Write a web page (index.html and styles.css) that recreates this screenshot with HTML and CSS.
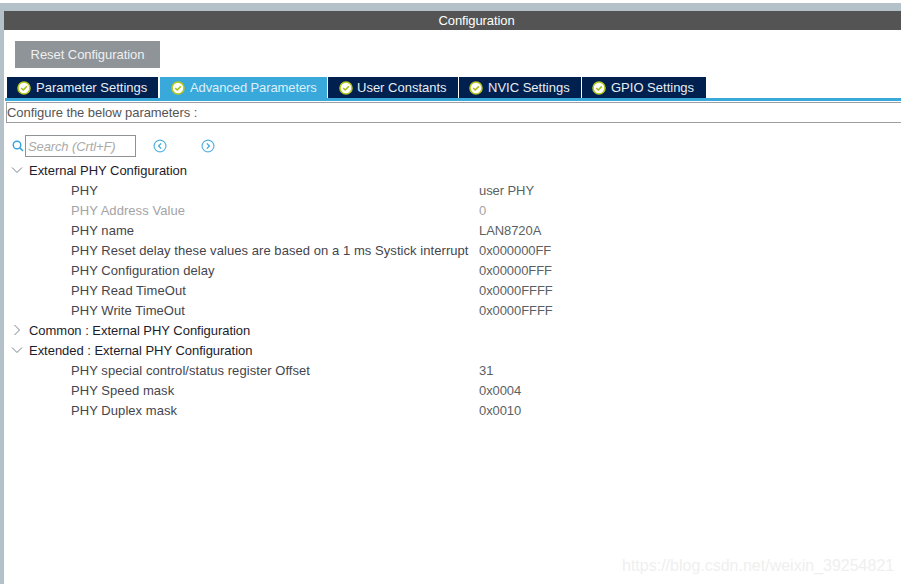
FILE: index.html
```html
<!DOCTYPE html>
<html lang="en">
<head>
<meta charset="utf-8">
<title>Configuration</title>
<link rel="stylesheet" href="styles.css">
</head>
<body>
<div class="topbar"></div>
<main class="panel">
  <header class="title">Configuration</header>
  <div class="toolbar"><button class="reset">Reset Configuration</button></div>
  <nav class="tabs">
    <div class="tab t1"><svg class="chk" viewBox="0 0 14 14"><circle cx="7" cy="7" r="6" fill="#fff" stroke="#b5c71c" stroke-width="1.6"/><path d="M4.2 7l2 2 3.6-3.6" fill="none" stroke="#a9bc10" stroke-width="1.5"/></svg>Parameter Settings</div>
    <div class="tab t2 active"><svg class="chk" viewBox="0 0 14 14"><circle cx="7" cy="7" r="6" fill="#fff" stroke="#b5c71c" stroke-width="1.6"/><path d="M4.2 7l2 2 3.6-3.6" fill="none" stroke="#a9bc10" stroke-width="1.5"/></svg>Advanced Parameters</div>
    <div class="tab t3"><svg class="chk" viewBox="0 0 14 14"><circle cx="7" cy="7" r="6" fill="#fff" stroke="#b5c71c" stroke-width="1.6"/><path d="M4.2 7l2 2 3.6-3.6" fill="none" stroke="#a9bc10" stroke-width="1.5"/></svg>User Constants</div>
    <div class="tab t4"><svg class="chk" viewBox="0 0 14 14"><circle cx="7" cy="7" r="6" fill="#fff" stroke="#b5c71c" stroke-width="1.6"/><path d="M4.2 7l2 2 3.6-3.6" fill="none" stroke="#a9bc10" stroke-width="1.5"/></svg>NVIC Settings</div>
    <div class="tab t5"><svg class="chk" viewBox="0 0 14 14"><circle cx="7" cy="7" r="6" fill="#fff" stroke="#b5c71c" stroke-width="1.6"/><path d="M4.2 7l2 2 3.6-3.6" fill="none" stroke="#a9bc10" stroke-width="1.5"/></svg>GPIO Settings</div>
  </nav>
  <div class="tabline"></div>
  <div class="desc">Configure the below parameters :</div>
  <div class="search">
    <svg class="mag" viewBox="0 0 12 12"><circle cx="5" cy="5" r="3.8" fill="none" stroke="#35a4dc" stroke-width="1.4"/><path d="M7.8 7.8l3.2 3.2" stroke="#35a4dc" stroke-width="1.6"/></svg>
    <div class="field">Search (Crtl+F)</div>
    <svg class="nav prev" viewBox="0 0 14 14"><circle cx="7" cy="7" r="5.9" fill="none" stroke="#5ab4e2" stroke-width="1.2"/><path d="M8.2 4.4L5.6 7l2.6 2.6" fill="none" stroke="#35a4dc" stroke-width="1.2"/></svg>
    <svg class="nav next" viewBox="0 0 14 14"><circle cx="7" cy="7" r="5.9" fill="none" stroke="#5ab4e2" stroke-width="1.2"/><path d="M5.8 4.4L8.4 7l-2.6 2.6" fill="none" stroke="#35a4dc" stroke-width="1.2"/></svg>
  </div>
  <section class="tree">
    <div class="row group"><svg class="arrow" viewBox="0 0 12 12"><path d="M1 3.5l5 5 5-5" fill="none" stroke="#7d8387" stroke-width="1"/></svg><span>External PHY Configuration</span></div>
    <div class="row"><span class="name">PHY</span><span class="val">user PHY</span></div>
    <div class="row off"><span class="name">PHY Address Value</span><span class="val">0</span></div>
    <div class="row"><span class="name">PHY name</span><span class="val">LAN8720A</span></div>
    <div class="row"><span class="name">PHY Reset delay these values are based on a 1 ms Systick interrupt</span><span class="val">0x000000FF</span></div>
    <div class="row"><span class="name">PHY Configuration delay</span><span class="val">0x00000FFF</span></div>
    <div class="row"><span class="name">PHY Read TimeOut</span><span class="val">0x0000FFFF</span></div>
    <div class="row"><span class="name">PHY Write TimeOut</span><span class="val">0x0000FFFF</span></div>
    <div class="row group"><svg class="arrow" viewBox="0 0 12 12"><path d="M3.5 1l5 5-5 5" fill="none" stroke="#7d8387" stroke-width="1"/></svg><span>Common : External PHY Configuration</span></div>
    <div class="row group"><svg class="arrow" viewBox="0 0 12 12"><path d="M1 3.5l5 5 5-5" fill="none" stroke="#7d8387" stroke-width="1"/></svg><span>Extended : External PHY Configuration</span></div>
    <div class="row"><span class="name">PHY special control/status register Offset</span><span class="val">31</span></div>
    <div class="row"><span class="name">PHY Speed mask</span><span class="val">0x0004</span></div>
    <div class="row"><span class="name">PHY Duplex mask</span><span class="val">0x0010</span></div>
  </section>
</main>
<div class="mark">https://blog.csdn.net/weixin_39254821</div>
</body>
</html>
```
FILE: styles.css
```css
* { box-sizing: border-box; }
html, body { margin: 0; height: 100%; overflow: hidden; }
body {
  background: #fff;
  font-family: "Liberation Sans", Arial, sans-serif;
  font-size: 13px;
  color: #333;
  width: 901px;
  height: 584px;
  position: relative;
  padding-top: 3px;
}
.topbar { height: 8px; background: #b5c1c8; }
.panel { margin: 0; border-left: 4px solid #b5c1c8; height: 573px; }
.title { height: 19px; background: #535453; color: #fff; text-align: center; line-height: 19px; font-size: 13px; letter-spacing: -.1px; padding-left: 48px; }
.toolbar { padding: 11px 0 9px 11px; height: 47px; }
.reset { display: block; width: 145px; height: 27px; padding: 0; border: 0; background: #8e9498; color: #eef0f1; font: 13px "Liberation Sans", Arial, sans-serif; letter-spacing: -.06px; }
.tabs { display: flex; height: 21px; padding-left: 3px; gap: 1px; }
.tab { display: flex; align-items: center; background: #002050; color: #e8edf2; font-size: 13px; padding-left: 11px; white-space: nowrap; }
.t1 { width: 151px; margin-right: 1px; padding-left: 10px; }
.t2 { width: 167px; letter-spacing: -.1px; }
.t3 { width: 130px; }
.t3 .chk { margin-right: 4px; }
.t4 { width: 122px; padding-left: 10px; }
.t5 { width: 124px; padding-left: 10px; }
.tab.active { background: #39a9db; color: #dceff8; }
.chk { width: 14px; height: 14px; margin-right: 5px; flex: none; }
.tabline { height: 3px; background: #39a9db; margin-left: 1px; }
.desc { height: 21px; margin-left: 2px; margin-top: 1px; border: 1px solid #9a9ea1; border-right: 0; line-height: 20px; font-size: 13px; letter-spacing: -.06px; color: #555; }
.search { display: flex; align-items: center; height: 22px; margin-top: 12px; padding-left: 8px; }
.mag { width: 12px; height: 12px; flex: none; }
.field { width: 111px; height: 22px; margin-left: 1px; border: 1px solid #8f9396; line-height: 21px; padding-left: 2px; font-style: italic; font-size: 13px; letter-spacing: -.12px; color: #aaa; }
.nav { width: 14px; height: 14px; flex: none; }
.prev { margin-left: 17px; }
.next { margin-left: 34px; }
.tree { margin-top: 3px; }
.row { display: flex; align-items: center; height: 20px; font-size: 13px; letter-spacing: .06px; color: #45454d; }
.name { width: 408px; margin-left: 67px; flex: none; white-space: nowrap; }
.val { color: #5b5f63; letter-spacing: -.08px; }
.off .name, .off .val { color: #a3a3a6; }
.group { color: #1c1c2a; letter-spacing: -.03px; }
.arrow { width: 12px; height: 12px; margin-left: 7px; margin-right: 6px; flex: none; }
.mark { position: absolute; left: 622px; top: 557px; font-size: 16px; color: #efefef; white-space: nowrap; }
```
